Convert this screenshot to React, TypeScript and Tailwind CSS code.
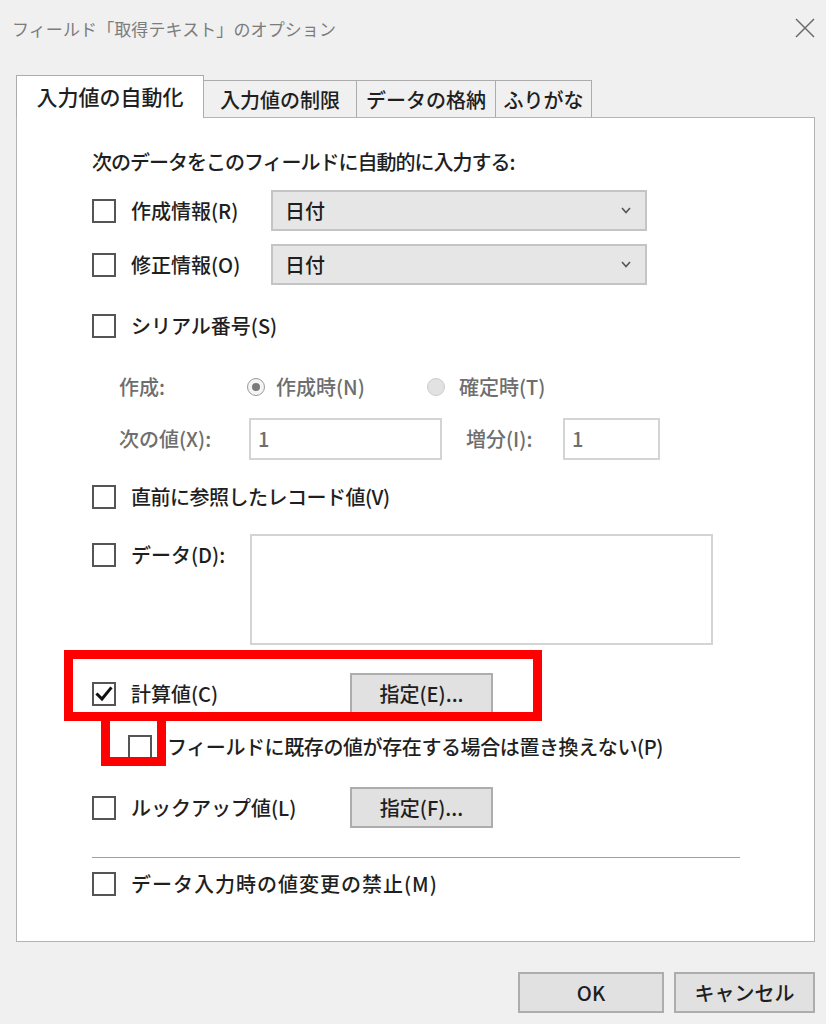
import React from 'react';

const Checkbox: React.FC<{ checked?: boolean }> = ({ checked }) => (
  <div className="w-[24px] h-[24px] shrink-0 border-2 border-[#555555] bg-white flex items-center justify-center">
    {checked && (
      <svg width="18" height="18" viewBox="0 0 18 18">
        <polyline points="2.5,9.5 7,14 15.5,3.5" fill="none" stroke="#111111" strokeWidth="3" strokeLinecap="square" />
      </svg>
    )}
  </div>
);

const CheckRow: React.FC<{ label: string; checked?: boolean; className?: string; children?: React.ReactNode }> = ({
  label,
  checked,
  className,
  children,
}) => (
  <div className={`flex items-center ${className ?? ''}`}>
    <Checkbox checked={checked} />
    <span className="ml-[15px] whitespace-nowrap">{label}</span>
    {children}
  </div>
);

const Dropdown: React.FC = () => (
  <div className="absolute left-[179px] top-0 w-[376px] h-[41px] bg-[#e6e6e6] border-2 border-[#c4c4c4] flex items-center justify-between pl-[12px] pr-[14px]">
    <span>日付</span>
    <svg width="10" height="7" viewBox="0 0 10 7">
      <polyline points="1,1 5,5.5 9,1" fill="none" stroke="#555555" strokeWidth="1.6" />
    </svg>
  </div>
);

const Button: React.FC<{ label: string; className?: string }> = ({ label, className }) => (
  <div
    className={`h-[41px] bg-[#e1e1e1] border-2 border-[#adadad] flex items-center justify-center text-[#1f1f1f] ${className ?? ''}`}
  >
    {label}
  </div>
);

const App: React.FC = () => {
  const tabs = [
    { label: '入力値の自動化', w: 'w-[188px]' },
    { label: '入力値の制限', w: 'w-[154px]' },
    { label: 'データの格納', w: 'w-[140px]' },
    { label: 'ふりがな', w: 'w-[97px]' },
  ];

  return (
    <div className="relative w-[826px] h-[1024px] overflow-hidden bg-[#f0f0f0] text-[20px] font-medium leading-none text-[#1f1f1f] font-['Noto_Sans_CJK_JP',sans-serif]">
      {/* title bar */}
      <div className="h-[56px] flex items-center justify-between pl-[12px] pr-[10px]">
        <span className="text-[17px] font-normal text-[#7c7c7c] tracking-[0.1px]">フィールド「取得テキスト」のオプション</span>
        <svg width="22" height="22" viewBox="0 0 22 22">
          <path d="M2 2 L20 20 M20 2 L2 20" stroke="#6a6a6a" strokeWidth="1.5" />
        </svg>
      </div>

      {/* tabs */}
      <div className="mt-[19px] h-[42px] pl-[16px] flex items-end">
        {tabs.map((t, i) =>
          i === 0 ? (
            <div
              key={t.label}
              className={`relative z-10 -mb-px h-[43px] ${t.w} bg-white border border-b-0 border-[#acacac] flex items-center justify-center text-[21px] pb-[2px]`}
            >
              {t.label}
            </div>
          ) : (
            <div
              key={t.label}
              className={`h-[37px] ${t.w} -ml-px bg-[#f0f0f0] border border-b-0 border-[#acacac] flex items-center justify-center text-[20px] pt-[2px]`}
            >
              {t.label}
            </div>
          )
        )}
      </div>

      {/* panel */}
      <div className="ml-[16px] w-[799px] h-[825px] bg-white border border-[#b4b4b4] pl-[75px] flex flex-col">
        <div className="mt-[29px] h-[30px] flex items-center tracking-[-1px]">次のデータをこのフィールドに自動的に入力する:</div>

        <div className="relative mt-[13px] h-[41px]">
          <CheckRow label="作成情報(R)" className="h-full" />
          <Dropdown />
        </div>
        <div className="relative mt-[13px] h-[41px]">
          <CheckRow label="修正情報(O)" className="h-full" />
          <Dropdown />
        </div>
        <CheckRow label="シリアル番号(S)" className="mt-[20px] h-[41px]" />

        {/* serial options (disabled) */}
        <div className="mt-[20px] h-[41px] pl-[27px] flex items-center text-[#6e6e6e]">
          <span className="w-[128px]">作成:</span>
          <div className="w-[18px] h-[18px] rounded-full border border-[#9a9a9a] bg-[#f4f4f4] flex items-center justify-center">
            <div className="w-[8px] h-[8px] rounded-full bg-[#7a7a7a]" />
          </div>
          <span className="ml-[11px] w-[151px]">作成時(N)</span>
          <div className="w-[18px] h-[18px] rounded-full border border-[#cccccc] bg-[#e2e2e2]" />
          <span className="ml-[14px]">確定時(T)</span>
        </div>
        <div className="mt-[11px] h-[42px] pl-[27px] flex items-center text-[#6e6e6e]">
          <span className="w-[130px]">次の値(X):</span>
          <div className="w-[193px] h-[42px] border-2 border-[#d4d4d4] flex items-center pl-[7px]">1</div>
          <span className="ml-[24px] w-[97px]">増分(I):</span>
          <div className="w-[97px] h-[42px] border-2 border-[#d4d4d4] flex items-center pl-[7px]">1</div>
        </div>

        <CheckRow label="直前に参照したレコード値(V)" className="mt-[16px] h-[41px] tracking-[-0.5px]" />

        <div className="mt-[17px] h-[111px] flex items-start">
          <CheckRow label="データ(D):" className="h-[42px] w-[158px]" />
          <div className="w-[463px] h-[111px] border-2 border-[#d4d4d4]" />
        </div>

        <div className="mt-[28px] h-[41px] flex items-center">
          <CheckRow label="計算値(C)" checked className="w-[258px]" />
          <Button label="指定(E)..." className="w-[143px]" />
        </div>
        <CheckRow
          label="フィールドに既存の値が存在する場合は置き換えない(P)"
          className="mt-[12px] h-[41px] pl-[36px] tracking-[-0.4px]"
        />
        <div className="mt-[20px] h-[41px] flex items-center">
          <CheckRow label="ルックアップ値(L)" className="w-[258px]" />
          <Button label="指定(F)..." className="w-[143px]" />
        </div>

        <div className="mt-[29px] h-px w-[648px] bg-[#a0a0a0]" />
        <CheckRow label="データ入力時の値変更の禁止(M)" className="mt-[11px] h-[30px] tracking-[1px]" />
      </div>

      {/* footer buttons */}
      <div className="mt-[30px] flex justify-end gap-[10px] pr-[11px]">
        <Button label="OK" className="w-[146px] h-[40px]" />
        <Button label="キャンセル" className="w-[141px] h-[40px]" />
      </div>

      {/* red highlight boxes */}
      <div className="absolute left-[64px] top-[650px] w-[478px] h-[71px] border-[9px] border-[#ff0000]" />
      <div className="absolute left-[101px] top-[712px] w-[65px] h-[54px] border-[9px] border-[#ff0000]" />
    </div>
  );
};

export default App;
